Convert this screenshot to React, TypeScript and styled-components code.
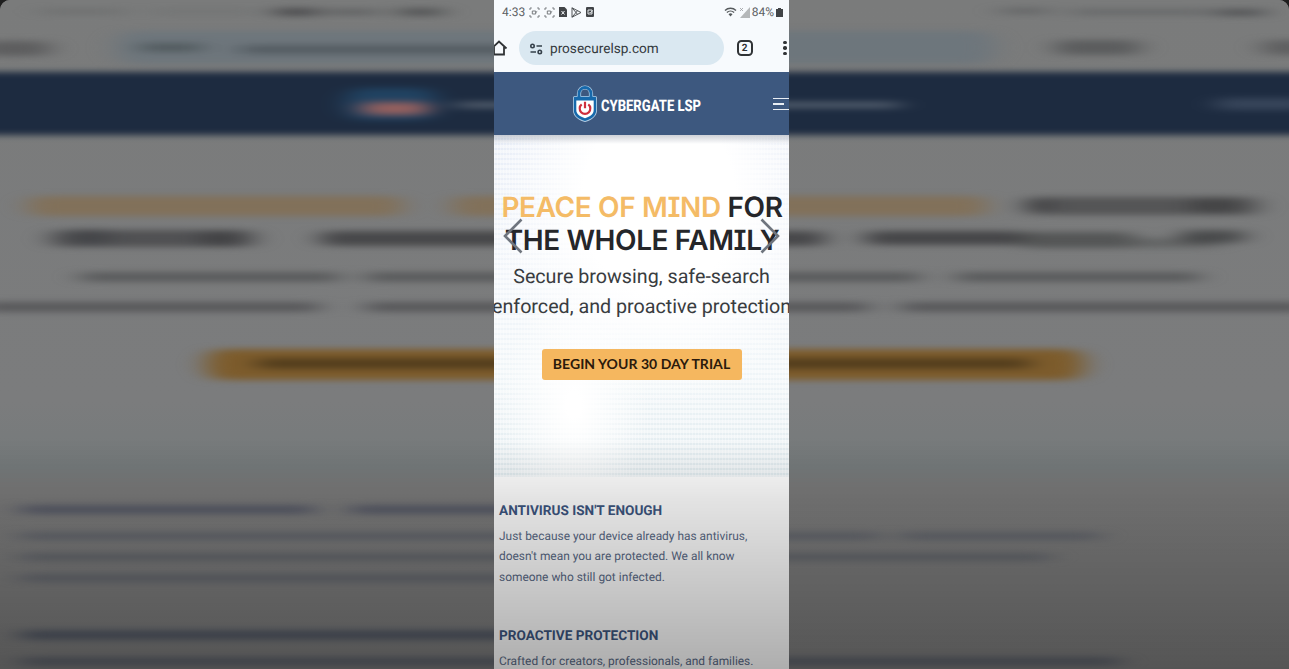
import React from "react";
import styled, { createGlobalStyle } from "styled-components";

const Global = createGlobalStyle`
  *{box-sizing:border-box}
  html,body{margin:0;padding:0;background:#1f1f1f;overflow:hidden}
  h1,h2,p{margin:0}
`;

const Stage = styled.main`
  position: relative;
  width: 1289px;
  height: 669px;
  overflow: hidden;
  border-radius: 10px 10px 0 0;
  background: #7a7b7b;
  font-family: Roboto, "Liberation Sans", sans-serif;
  text-rendering: geometricPrecision;
`;

const Backdrop = styled.svg`
  position: absolute;
  inset: 0;
  display: block;
`;

const Shade = styled.div`
  position: absolute;
  inset: 440px 0 0 0;
  background: linear-gradient(rgba(0,0,0,0), rgba(0,0,0,.1) 26%, rgba(0,0,0,.31));
  pointer-events: none;
`;

const Phone = styled.section`
  position: relative;
  width: 295px;
  height: 669px;
  margin-left: 494px;
  overflow: hidden;
  background: #fdfdfd;
`;

const StatusBar = styled.div`
  display: flex;
  align-items: center;
  justify-content: space-between;
  height: 24px;
  padding: 0 6px 0 8px;
  background: #f7fafd;
  color: #5c6063;
  font-size: 12px;
`;

const StatusGroup = styled.div<{ $gap: number }>`
  display: flex;
  align-items: center;
  gap: ${(p) => p.$gap}px;
`;

const Toolbar = styled.div`
  display: flex;
  align-items: center;
  height: 48px;
  background: #f7fafd;
`;

const HomeSlot = styled.div`
  width: 25px;
  height: 18px;
  svg { display: block; margin-left: -4px; }
`;

const Address = styled.div`
  display: flex;
  align-items: center;
  gap: 6px;
  width: 205px;
  height: 34px;
  padding: 1px 0 0 10px;
  border-radius: 17px;
  background: #dae8f1;
  color: #34393d;
  font-size: 13.6px;
`;

const TabCount = styled.div`
  display: grid;
  place-items: center;
  width: 16px;
  height: 16px;
  padding-top: 1px;
  margin-left: 12.5px;
  border: 2px solid #303336;
  border-radius: 4.5px;
  color: #303336;
  font-size: 10px;
  font-weight: 700;
  line-height: 1;
`;

const Dots = styled.div`
  display: grid;
  gap: 2px;
  margin-left: 30.5px;
  span { width: 3.5px; height: 3.5px; border-radius: 50%; background: #303336; }
`;

const SiteHeader = styled.header`
  display: flex;
  align-items: center;
  justify-content: space-between;
  height: 63px;
  padding-left: 78px;
  background: #3d587f;
`;

const Brand = styled.div`
  display: flex;
  align-items: center;
  gap: 2.5px;
`;

const BrandName = styled.span`
  width: 101px;
  margin-top: 4px;
  color: #fff;
  font-size: 16px;
  font-weight: 800;
  line-height: 20px;
  white-space: nowrap;
  transform: scaleX(0.815);
  transform-origin: left center;
`;

const MenuBars = styled.div`
  display: grid;
  gap: 4px;
  width: 16px;
  margin-top: 1px;
  span { height: 1.6px; background: #e9eef4; }
  span:nth-child(2) { width: 11px; }
`;

const Hero = styled.section`
  position: relative;
  display: flex;
  flex-direction: column;
  align-items: center;
  height: 342px;
  padding-top: 56px;
  background:
    linear-gradient(rgba(80,90,110,.28), rgba(255,255,255,0) 9px),
    radial-gradient(ellipse 170px 210px at 165px 65px, #fff 45%, rgba(255,255,255,0)),
    radial-gradient(ellipse 75px 120px at 80px 270px, #fff 10%, rgba(255,255,255,0)),
    repeating-linear-gradient(90deg, rgba(255,255,255,.35) 0 1px, rgba(255,255,255,0) 1px 3px),
    repeating-linear-gradient(rgba(255,255,255,.5) 0 3px, rgba(255,255,255,0) 3px 5px),
    linear-gradient(#e5ebf6, #f1f5fa 40%, #eff5f8 70%, #e0eaee);
  white-space: nowrap;
`;

const Headline = styled.h1`
  padding-left: 1px;
  color: #25262a;
  font-family: Inter, Roboto, sans-serif;
  font-size: 28px;
  font-weight: 600;
  line-height: 33px;
  text-align: center;
  font-feature-settings: "cv08";
  span { display: block; }
  em { color: #f4bb66; font-style: normal; }
`;

const HeadLine = styled.span<{ $spacing: number }>`
  letter-spacing: ${(p) => p.$spacing}px;
`;

const Lead = styled.p`
  margin-top: 5px;
  color: #393c40;
  font-size: 19.7px;
  line-height: 30px;
  text-align: center;
`;

const Cta = styled.button`
  width: 200px;
  height: 31px;
  margin-top: 27px;
  padding: 0 0 2px;
  border: 0;
  border-radius: 3px;
  background: #f5b75f;
  color: #2b1a0c;
  font-family: Lato, sans-serif;
  font-size: 14px;
  font-weight: 700;
  letter-spacing: 0.05px;
`;

const Arrow = styled.svg<{ $side: "left" | "right" }>`
  position: absolute;
  top: 83px;
  ${(p) => p.$side}: 9px;
`;

const Article = styled.article<{ $top: number }>`
  padding: ${(p) => p.$top}px 0 0 5px;
  color: #5a6a86;
  font-size: 11.93px;
  line-height: 20.4px;
  white-space: nowrap;
  h2 { margin-bottom: 5px; color: #3d5680; font-size: 13.6px; font-weight: 700; line-height: 20px; }
`;

/* x, y, width, height, colour, opacity */
type Smear = [number, number, number, number, string, number];
const smears: Smear[] = [
  [40, 9, 85, 5, "#5c5e60", 0.4],
  [150, 9, 110, 5, "#606264", 0.25],
  [274, 8, 44, 8, "#3d3e40", 0.75],
  [325, 9, 55, 6, "#505254", 0.6],
  [398, 8, 45, 8, "#404244", 0.65],
  [1000, 8, 50, 6, "#505254", 0.5],
  [1070, 9, 140, 6, "#55585a", 0.5],
  [1215, 9, 50, 7, "#3f4143", 0.65],
  [115, 31, 880, 33, "#6a747c", 0.75],
  [-20, 41, 70, 15, "#4e4f50", 0.65],
  [140, 43, 62, 9, "#41494d", 0.6],
  [240, 45, 480, 9, "#4c545b", 0.75],
  [1055, 40, 85, 15, "#4c4d4f", 0.65],
  [1262, 40, 50, 15, "#48494b", 0.55],
  [345, 88, 92, 32, "#22567c", 0.55],
  [362, 102, 66, 13, "#a8645e", 0.85],
  [455, 102, 445, 6, "#66707c", 0.75],
  [1215, 98, 95, 12, "#66748a", 0.35],
  [28, 196, 375, 20, "#846c4c", 0.7],
  [452, 196, 535, 20, "#846c4c", 0.7],
  [1024, 197, 235, 18, "#404142", 0.65],
  [1030, 198, 20, 14, "#333436", 0.6],
  [1190, 198, 50, 15, "#333436", 0.5],
  [50, 230, 205, 17, "#3a3b3d", 0.65],
  [70, 229, 40, 16, "#333436", 0.4],
  [200, 231, 40, 15, "#333436", 0.5],
  [320, 231, 505, 15, "#343537", 0.72],
  [865, 231, 160, 14, "#303133", 0.7],
  [1020, 232, 115, 16, "#3c3d3e", 0.6],
  [1130, 238, 90, 10, "#48494a", 0.45],
  [1180, 230, 65, 13, "#333436", 0.65],
  [80, 272, 260, 10, "#4a4b4d", 0.65],
  [365, 272, 555, 10, "#4a4b4d", 0.65],
  [955, 272, 245, 10, "#4a4b4d", 0.65],
  [-20, 302, 340, 10, "#464749", 0.65],
  [365, 302, 505, 10, "#464749", 0.65],
  [900, 302, 410, 10, "#464749", 0.65],
  [206, 349, 878, 31, "#7d5c2c", 1],
  [256, 358, 775, 11, "#4c381b", 0.85],
  [20, 505, 295, 9, "#4c5062", 0.75],
  [350, 505, 390, 9, "#4c5062", 0.75],
  [20, 532, 860, 8, "#555a66", 0.6],
  [900, 532, 200, 8, "#555a66", 0.6],
  [20, 553, 1030, 8, "#555a64", 0.6],
  [20, 574, 720, 8, "#555a66", 0.6],
  [20, 630, 700, 10, "#454d5e", 0.75],
  [20, 657, 1100, 9, "#4c5260", 0.65],
];

function BlurredBackdrop() {
  return (
    <Backdrop width="1289" height="669" viewBox="0 0 1289 669" aria-hidden="true">
      <defs>
        <filter id="soft" x="-100" y="-30" width="1489" height="729" filterUnits="userSpaceOnUse" colorInterpolationFilters="sRGB">
          <feGaussianBlur stdDeviation="13 3" />
        </filter>
        <linearGradient id="page" x1="0" y1="0" x2="0" y2="1">
          <stop offset="0" stopColor="#7a7b7b" />
          <stop offset="0.6" stopColor="#7b7c7d" />
          <stop offset="0.7" stopColor="#757a7b" />
          <stop offset="0.73" stopColor="#7a7a7a" />
          <stop offset="1" stopColor="#7c7c7c" />
        </linearGradient>
      </defs>
      <rect width="1289" height="669" fill="url(#page)" />
      <g filter="url(#soft)">
        <rect x="-90" y="72" width="1469" height="63" fill="#1d2b40" />
        {smears.map(([x, y, w, h, fill, opacity], i) => (
          <rect key={i} x={x} y={y} width={w} height={h} rx={h / 2} fill={fill} opacity={opacity} />
        ))}
      </g>
    </Backdrop>
  );
}

const CaptureIcon = () => (
  <svg width="11" height="11" viewBox="0 0 11 11" fill="none" stroke="#777b7e" strokeWidth="1">
    <path d="M1 3V1h1.800M8.200 1H10v2M10 8v2H8.200M2.800 10H1V8" />
    <path d="M3.300 4h3.400v3H3.300zM6.700 5.500l1.500-1" />
  </svg>
);

const LockLogo = () => (
  <svg width="26" height="38" viewBox="0 0 26 38">
    <path d="M7 13V8.500a6 6 0 0 1 12 0V13" fill="none" stroke="#b9d2e8" strokeWidth="4.200" />
    <path d="M3 11h20a2 2 0 0 1 2 2v12c0 6-5 10-12 12C6 35 1 31 1 25V13a2 2 0 0 1 2-2z" fill="#b9d2e8" />
    <path d="M3 11.800h20a1.200 1.200 0 0 1 1.200 1.200v12c0 5.500-4.500 9.200-11.200 11.100C6.300 34.200 1.800 30.500 1.800 25V13A1.200 1.200 0 0 1 3 11.800z" fill="#1769ab" />
    <path d="M7 13V8.500a6 6 0 0 1 12 0V13" fill="none" stroke="#1769ab" strokeWidth="2.800" />
    <path d="M4.300 15.500h17.400V25c0 4.200-3.500 6.600-8.700 8.200C7.800 31.600 4.300 29.200 4.300 25z" fill="#fff" />
    <path d="M9.700 19.400a5.300 5.300 0 1 0 6.600 0M13 16.800v6.400" fill="none" stroke="#cf2f3d" strokeWidth="2.200" />
  </svg>
);

export default function App() {
  return (
    <>
      <Global />
      <Stage>
        <BlurredBackdrop />
        <Phone>
          <StatusBar>
            <StatusGroup $gap={4}>
              <span>4:33</span>
              <CaptureIcon />
              <CaptureIcon />
              <svg width="8" height="10" viewBox="0 0 8 10"><path d="M0 0h5.500L8 2.500V10H0z" fill="#414447" /><path d="m2.500 4 3 3.500m0-3.500-3 3.500" stroke="#f7fafd" strokeWidth="1" /></svg>
              <svg width="11" height="11" viewBox="0 0 11 11" fill="none" stroke="#505356"><path d="M1 .8 10 5.500 1 10.200zM1 .8l5.500 6.500M1 10.200l5.500-6.500" /></svg>
              <svg width="8" height="10" viewBox="0 0 8 10"><rect width="8" height="10" rx="1" fill="#414447" /><path d="M2 3h4v4H2zM3.500 5l1 1 2-2.500" fill="none" stroke="#f7fafd" strokeWidth=".9" /></svg>
            </StatusGroup>
            <StatusGroup $gap={2}>
              <svg width="13" height="10" viewBox="0 0 13 10" fill="none" stroke="#55595c" strokeWidth="1.400"><path d="M1 3.500a8 8 0 0 1 11 0M2.900 5.600a5.200 5.200 0 0 1 7.200 0" /><path d="M4.500 7.200a2.800 2.800 0 0 1 4 0L6.500 9.500z" fill="#55595c" stroke="none" /></svg>
              <svg width="11" height="11" viewBox="0 0 11 11"><path d="M11 0v11H1z" fill="#b4b7b9" /><path d="m1 1 3 3m0-3L1 4" stroke="#999c9f" strokeWidth=".8" /></svg>
              <span>84%</span>
              <svg width="7" height="9" viewBox="0 0 7 9"><path d="M2 0h3v1h2v8H0V1h2z" fill="#414447" /></svg>
            </StatusGroup>
          </StatusBar>
          <Toolbar>
            <HomeSlot>
              <svg width="18" height="18" viewBox="0 0 18 18" fill="none" stroke="#303336" strokeWidth="1.800"><path d="M1.500 9.500 9 2.500l7.500 7M4 8v7.500h10V8" /></svg>
            </HomeSlot>
            <Address>
              <svg width="15" height="12" viewBox="0 0 15 12" fill="none" stroke="#35404a" strokeWidth="1.600"><circle cx="3.500" cy="3" r="1.700" /><path d="M7.500 3H13M1.500 9H7" /><circle cx="10.800" cy="9" r="1.700" /></svg>
              <span>prosecurelsp.com</span>
            </Address>
            <TabCount>2</TabCount>
            <Dots><span /><span /><span /></Dots>
          </Toolbar>
          <SiteHeader>
            <Brand>
              <LockLogo />
              <BrandName>CYBERGATE LSP</BrandName>
            </Brand>
            <MenuBars><span /><span /><span /></MenuBars>
          </SiteHeader>
          <Hero>
            <Headline>
              <HeadLine $spacing={-0.38}><em>PEACE OF MIND</em> FOR</HeadLine>
              <HeadLine $spacing={-0.42}>THE WHOLE FAMILY</HeadLine>
            </Headline>
            <Lead>Secure browsing, safe-search<br />enforced, and proactive protection</Lead>
            <Cta>BEGIN YOUR 30 DAY TRIAL</Cta>
            <Arrow $side="left" width="20" height="36" viewBox="0 0 20 36" fill="none" stroke="#6f757e" strokeWidth="2.600"><path d="M18.500 1.500 2 18l16.500 16.500" /></Arrow>
            <Arrow $side="right" width="20" height="36" viewBox="0 0 20 36" fill="none" stroke="#6f757e" strokeWidth="2.600"><path d="M1.500 1.500 18 18 1.500 34.500" /></Arrow>
          </Hero>
          <Article $top={24}>
            <h2>ANTIVIRUS ISN'T ENOUGH</h2>
            <p>Just because your device already has antivirus,<br />doesn't mean you are protected. We all know<br />someone who still got infected.</p>
          </Article>
          <Article $top={39}>
            <h2>PROACTIVE PROTECTION</h2>
            <p>Crafted for creators, professionals, and families.</p>
          </Article>
        </Phone>
        <Shade />
      </Stage>
    </>
  );
}
